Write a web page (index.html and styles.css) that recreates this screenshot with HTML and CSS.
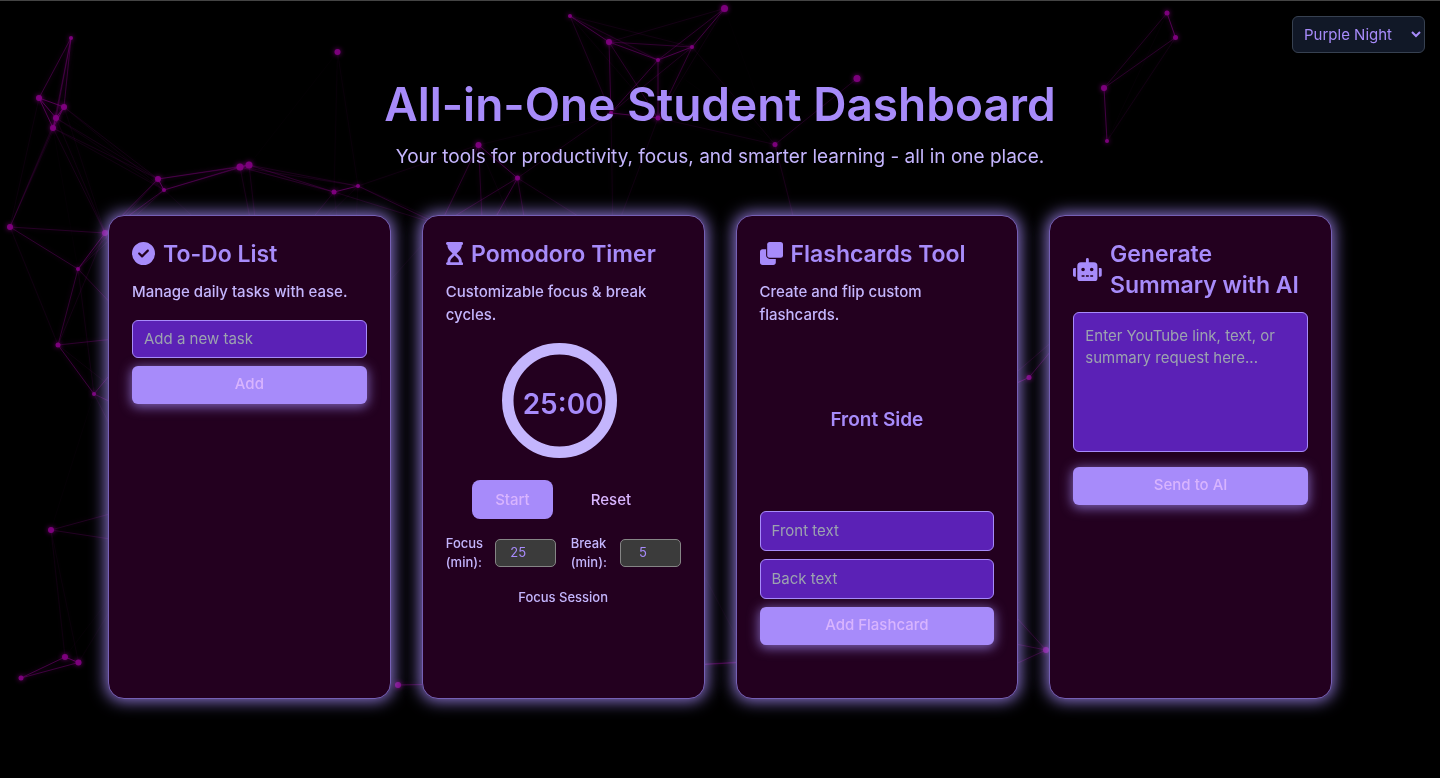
FILE: index.html
```html
<!DOCTYPE html>
<html lang="en">
<head>
<meta charset="utf-8">
<meta name="viewport" content="width=device-width, initial-scale=1">
<title>All-in-One Student Dashboard</title>
<link rel="stylesheet" href="styles.css">
</head>
<body>
<canvas class="particles" id="particles" aria-hidden="true"></canvas>
<select class="theme-select" aria-label="Theme">
  <option>Purple Night</option>
  <option>Light</option>
  <option>Dark</option>
</select>
<header class="hero">
  <h1 class="hero-title">All-in-One Student Dashboard</h1>
  <p class="hero-subtitle">Your tools for productivity, focus, and smarter learning - all in one place.</p>
</header>
<main class="cards">
  <section class="card">
    <h2 class="card-title">
      <svg class="icon" viewBox="0 0 512 512" aria-hidden="true"><path d="M256 512A256 256 0 1 0 256 0a256 256 0 1 0 0 512zM369 209L241 337c-9.400 9.400-24.600 9.400-33.900 0l-64-64c-9.400-9.400-9.400-24.600 0-33.900s24.600-9.400 33.900 0l47 47L335 175c9.400-9.400 24.600-9.400 33.900 0s9.400 24.600 0 33.900z"/></svg>
      <span>To-Do List</span>
    </h2>
    <p class="card-text">Manage daily tasks with ease.</p>
    <form class="stack">
      <input class="field" type="text" placeholder="Add a new task" aria-label="New task">
      <button class="btn btn-wide" type="button">Add</button>
    </form>
  </section>

  <section class="card">
    <h2 class="card-title">
      <svg class="icon" viewBox="0 0 384 512" aria-hidden="true"><path fill-rule="evenodd" d="M0 32C0 14.300 14.300 0 32 0H352c17.700 0 32 14.300 32 32s-14.300 32-32 32V75c0 42.400-16.900 83.100-46.900 113.100L237.300 256l67.900 67.900c30 30 46.900 70.700 46.900 113.100v11c17.700 0 32 14.300 32 32s-14.300 32-32 32H32c-17.700 0-32-14.300-32-32s14.300-32 32-32V437c0-42.400 16.900-83.100 46.900-113.100L146.700 256 78.900 188.100C48.900 158.100 32 117.400 32 75V64C14.300 64 0 49.700 0 32zM96 448H288V437c0-25.500-10.100-49.900-28.100-67.900L192 301.300l-67.900 67.900c-18 18-28.100 42.400-28.100 67.900v11z"/></svg>
      <span>Pomodoro Timer</span>
    </h2>
    <p class="card-text">Customizable focus &amp; break cycles.</p>
    <div class="timer">
      <svg class="timer-ring" viewBox="0 0 123 115" aria-hidden="true"><circle cx="57.500" cy="57.500" r="51.750" fill="none" stroke="#c4b5fd" stroke-width="11.500"/></svg>
      <span class="timer-value">25:00</span>
    </div>
    <div class="timer-actions">
      <button class="btn btn-start" type="button">Start</button>
      <button class="btn btn-reset" type="button">Reset</button>
    </div>
    <div class="durations">
      <div class="duration-group">
        <label class="duration-label" for="focus">Focus (min):</label>
        <input class="duration" id="focus" type="number" value="25">
      </div>
      <div class="duration-group">
        <label class="duration-label" for="break">Break (min):</label>
        <input class="duration" id="break" type="number" value="5">
      </div>
    </div>
    <p class="session">Focus Session</p>
  </section>

  <section class="card">
    <h2 class="card-title">
      <svg class="icon" viewBox="0 0 512 512" aria-hidden="true"><rect x="160" width="352" height="352" rx="56"/><path d="M56 160h80v136c0 46 36 80 80 80h136v80c0 31-25 56-56 56H56c-31 0-56-25-56-56V216c0-31 25-56 56-56z"/></svg>
      <span>Flashcards Tool</span>
    </h2>
    <p class="card-text">Create and flip custom flashcards.</p>
    <div class="flashcard">Front Side</div>
    <form class="stack">
      <input class="field field-tall" type="text" placeholder="Front text" aria-label="Front text">
      <input class="field field-tall" type="text" placeholder="Back text" aria-label="Back text">
      <button class="btn btn-wide" type="button">Add Flashcard</button>
    </form>
  </section>

  <section class="card">
    <h2 class="card-title">
      <svg class="icon" viewBox="0 0 640 512" aria-hidden="true"><path d="M32 224H64V416H32A32 32 0 0 1 0 384V256A32 32 0 0 1 32 224Zm512-48V448a64 64 0 0 1-64 64H160a64 64 0 0 1-64-64V176a80 80 0 0 1 80-80H288V32a32 32 0 0 1 64 0V96H464A80 80 0 0 1 544 176ZM264 256a40 40 0 1 0-40 40A40 40 0 0 0 264 256Zm-8 128H192v32h64Zm96 0H288v32h64ZM456 256a40 40 0 1 0-40 40A40 40 0 0 0 456 256Zm-8 128H384v32h64ZM640 256V384a32 32 0 0 1-32 32H576V224h32A32 32 0 0 1 640 256Z"/></svg>
      <span>Generate Summary with AI</span>
    </h2>
    <form class="ai-form">
      <textarea class="field field-area" placeholder="Enter YouTube link, text, or summary request here..." aria-label="Summary request"></textarea>
      <button class="btn btn-wide" type="button">Send to AI</button>
    </form>
  </section>
</main>
<script src="script.js"></script>
</body>
</html>
```

FILE: styles.css
```css
* {
  box-sizing: border-box;
}

body {
  margin: 0;
  min-height: 100vh;
  border-top: 1px solid #444;
  background: #000;
  color: #c4b5fd;
  font-family: Inter, "Liberation Sans", sans-serif;
  font-size: 16px;
}

button,
input,
select,
textarea {
  font: inherit;
}

h1,
h2,
p {
  margin: 0;
}

.particles {
  position: fixed;
  inset: 0;
  width: 100%;
  height: 100%;
  z-index: -1;
}

.theme-select {
  position: absolute;
  top: 16px;
  right: 15px;
  width: 133px;
  height: 37px;
  padding: 0 0 1px 7px;
  border: 1px solid #374151;
  border-radius: 6px;
  background: #111827;
  color: #a78bfa;
  font-size: 15px;
}

.hero {
  padding: 74px 24px 44px;
  text-align: center;
}

.hero-title {
  color: #a78bfa;
  font-size: 46px;
  font-weight: 600;
  line-height: 58px;
}

.hero-subtitle {
  margin-top: 10px;
  font-size: 19px;
  line-height: 28px;
}

.cards {
  display: grid;
  grid-template-columns: repeat(4, minmax(0, 1fr));
  gap: 31px;
  width: 85%;
  margin: 0 auto;
}

.card {
  min-height: 484px;
  padding: 23px;
  border: 1px solid #7560b5;
  border-radius: 16px;
  background: #23001f;
  box-shadow: 0 0 16px 2px rgba(167, 139, 250, 0.85);
}

.card-title {
  display: flex;
  align-items: center;
  gap: 8px;
  color: #a78bfa;
  font-size: 23px;
  font-weight: 600;
  line-height: 31px;
}

.icon {
  flex: none;
  height: 23px;
  margin-bottom: 2px;
  fill: currentColor;
}

.card-text {
  margin-top: 10px;
  font-size: 15px;
  font-weight: 500;
  line-height: 23px;
}

.stack {
  display: grid;
  gap: 8px;
}

.card-text + .stack {
  margin-top: 17px;
}

.field {
  width: 100%;
  height: 38px;
  padding: 0 11px 2px;
  border: 1px solid #a78bfa;
  border-radius: 6px;
  background: #5b21b6;
  color: #c4b5fd;
  font-size: 15px;
}

.field::placeholder {
  color: #9ca3af;
}

.field-tall {
  height: 40px;
}

.field-area {
  display: block;
  height: 140px;
  padding: 12px 11px;
  line-height: 22px;
  resize: none;
}

.btn {
  border: 0;
  color: #d8b4fe;
  font-size: 15px;
  font-weight: 500;
}

.btn-wide {
  height: 38px;
  padding: 0 0 3px;
  border-radius: 6px;
  background: #a78bfa;
  box-shadow: 0 2px 12px 1px rgba(167, 139, 250, 0.7);
}

.timer {
  position: relative;
  width: 123px;
  margin: 17px auto 0;
}

.timer-ring {
  display: block;
  width: 100%;
}

.timer-value {
  position: absolute;
  inset: 6px 0 0;
  display: grid;
  place-items: center;
  color: #a78bfa;
  font-size: 28px;
  font-weight: 600;
}

.timer-actions {
  display: flex;
  justify-content: center;
  gap: 15px;
  margin-top: 22px;
}

.btn-start,
.btn-reset {
  height: 39px;
  padding: 0 23px 1px;
  border-radius: 8px;
}

.btn-start {
  background: #a78bfa;
}

.btn-reset {
  background: transparent;
}

.durations {
  display: grid;
  grid-template-columns: 1fr 1fr;
  gap: 15px;
  margin-top: 15px;
}

.duration-group {
  display: grid;
  grid-template-columns: minmax(0, 1fr) 61px;
  align-items: center;
  gap: 11px;
}

.duration-label {
  font-size: 13px;
  font-weight: 500;
  line-height: 19px;
}

.duration {
  width: 100%;
  height: 28px;
  padding: 0 0 2px 1px;
  border: 1px solid #858585;
  border-radius: 5px;
  background: #3b3b3b;
  color: #a78bfa;
  font-size: 13px;
  text-align: center;
}

.session {
  margin-top: 15px;
  font-size: 13px;
  font-weight: 500;
  line-height: 20px;
  text-align: center;
}

.flashcard {
  display: grid;
  place-items: center;
  height: 185px;
  padding-top: 2px;
  color: #a78bfa;
  font-size: 19px;
  font-weight: 600;
}

.ai-form {
  display: grid;
  gap: 15px;
  margin-top: 11px;
}
```

FILE: script.js
```javascript
// Particle network behind the dashboard: x, y, radius.
const particles = [
  [71, 38, 2], [39, 98, 3], [64, 107, 3], [56, 118, 3], [53, 128, 3],
  [158, 179, 3], [164, 190, 2], [240, 167, 3.5], [249, 165, 3.5],
  [334, 192, 2.5], [358, 186, 2], [337.5, 52, 3], [10, 227, 3],
  [105, 233, 3], [78, 269, 2], [58, 345, 2.5], [94, 394, 2],
  [51, 530, 3], [65, 657, 3], [78.5, 662.5, 3], [21, 678, 2.5],
  [398, 685, 3], [570, 16, 2], [609, 42, 3], [658, 60, 2],
  [692, 47, 2], [724.5, 8.5, 3.5], [611, 113, 2], [658, 118, 2.5],
  [478.5, 145, 3], [517.5, 178, 2.5], [775, 144.5, 2.5], [857, 78.5, 3.5],
  [1167, 13, 2.5], [1175.5, 37.5, 2.5], [1104, 88, 3], [1107, 141, 2],
  [1029, 377.5, 2.5], [1046, 650, 3],
  [262, 280, 2], [440, 225, 2], [483, 240, 2], [533, 270, 2],
  [613, 238, 2], [803, 255, 2], [142, 336, 2], [160, 425, 2],
  [150, 503, 2], [150, 545, 2], [990, 395, 2], [1075, 322, 2],
  [985, 583, 2], [960, 633, 2], [970, 685, 2], [350, 325, 2],
  [460, 430, 2], [455, 684, 2], [675, 666, 2], [770, 660, 2],
  [685, 540, 2], [750, 662, 2]
];
const reach = 150;
const canvas = document.getElementById("particles");

function draw() {
  canvas.width = window.innerWidth;
  canvas.height = window.innerHeight;
  const ctx = canvas.getContext("2d");
  ctx.shadowColor = "#800080";
  ctx.shadowBlur = 5;
  particles.forEach(([x, y], i) => {
    particles.slice(i + 1).forEach(([u, v]) => {
      const distance = Math.hypot(x - u, y - v);
      if (distance >= reach) return;
      ctx.strokeStyle = `rgba(128, 0, 128, ${0.75 * (1 - distance / reach)})`;
      ctx.beginPath();
      ctx.moveTo(x, y);
      ctx.lineTo(u, v);
      ctx.stroke();
    });
  });
  ctx.fillStyle = "rgba(128, 0, 128, 0.95)";
  particles.forEach(([x, y, r]) => {
    ctx.beginPath();
    ctx.arc(x, y, r, 0, Math.PI * 2);
    ctx.fill();
  });
}

draw();
window.addEventListener("resize", draw);
```
